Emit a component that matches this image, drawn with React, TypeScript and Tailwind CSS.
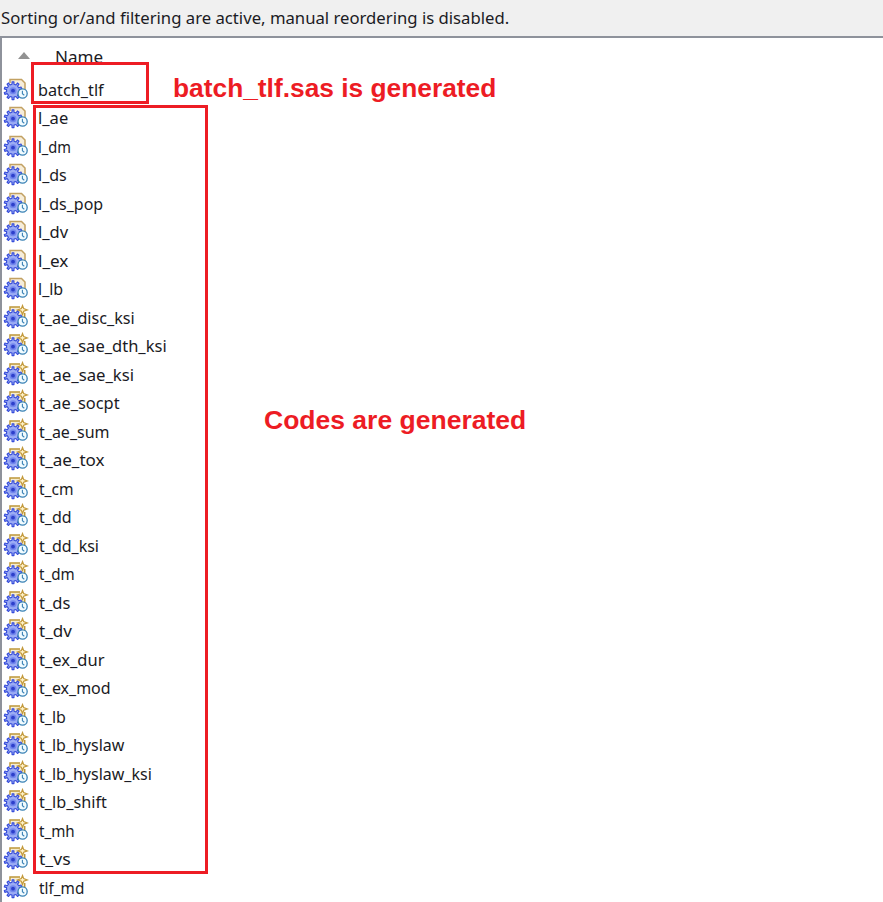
import { useLayoutEffect, useRef, useState } from "react";

type Row = { name: string; width: number };

const rows: Row[] = [
  { name: "batch_tlf", width: 66 },
  { name: "l_ae", width: 30 },
  { name: "l_dm", width: 33 },
  { name: "l_ds", width: 29 },
  { name: "l_ds_pop", width: 65 },
  { name: "l_dv", width: 30 },
  { name: "l_ex", width: 30 },
  { name: "l_lb", width: 25 },
  { name: "t_ae_disc_ksi", width: 96 },
  { name: "t_ae_sae_dth_ksi", width: 128 },
  { name: "t_ae_sae_ksi", width: 95 },
  { name: "t_ae_socpt", width: 81 },
  { name: "t_ae_sum", width: 71 },
  { name: "t_ae_tox", width: 66 },
  { name: "t_cm", width: 35 },
  { name: "t_dd", width: 33 },
  { name: "t_dd_ksi", width: 60 },
  { name: "t_dm", width: 36 },
  { name: "t_ds", width: 31 },
  { name: "t_dv", width: 33 },
  { name: "t_ex_dur", width: 66 },
  { name: "t_ex_mod", width: 72 },
  { name: "t_lb", width: 27 },
  { name: "t_lb_hyslaw", width: 85 },
  { name: "t_lb_hyslaw_ksi", width: 113 },
  { name: "t_lb_shift", width: 68 },
  { name: "t_mh", width: 36 },
  { name: "t_vs", width: 32 },
  { name: "tlf_md", width: 45 },
];

/* Text squeezed horizontally to a known width. */
function FitText({ text, width }: { text: string; width: number }) {
  const ref = useRef<HTMLSpanElement>(null);
  const [scale, setScale] = useState(1);
  useLayoutEffect(() => {
    if (ref.current) setScale(width / ref.current.offsetWidth);
  }, [width]);
  return (
    <span ref={ref} className="inline-block origin-left whitespace-nowrap" style={{ transform: `scaleX(${scale})` }}>
      {text}
    </span>
  );
}

const TEETH = 10;
const gearPoints = Array.from({ length: TEETH * 4 }, (_, i) => {
  const step = (Math.PI * 2) / TEETH;
  const offsets = [-0.24, -0.17, 0.17, 0.24];
  const angle = (Math.floor(i / 4) + offsets[i % 4]) * step - Math.PI / 2;
  const radius = i % 4 === 1 || i % 4 === 2 ? 8.9 : 6.5;
  return `${(11 + radius * Math.cos(angle)).toFixed(2)},${(15.6 + radius * Math.sin(angle)).toFixed(2)}`;
}).join(" ");

function ProgramIcon({ spark }: { spark: boolean }) {
  return (
    <svg className="h-7 w-7 shrink-0" viewBox="0 0.9 28 28" fill="none">
      {spark ? (
        <g>
          <path d="M9 4h9l5 6v6H12z" fill="#f5ecd0" />
          <path d="M8 8V4H18M22.7 10V15" stroke="#bd9638" strokeWidth="1.5" />
          <path d="M20.5 2.4l1.2 3.1 3.6 1.3-3.6 1.3-1.2 3.3-1.2-3.3-3.8-1.3 3.8-1.3z" fill="#fff2c8" stroke="#c39a3d" strokeWidth="1.2" />
        </g>
      ) : (
        <path d="M8 8V4.4H19.5L23 8V16H12" fill="#f6edda" stroke="#c2a162" strokeWidth="1.5" />
      )}
      <polygon points={gearPoints} fill="#9cacf4" stroke="#374dda" strokeWidth="1.15" strokeLinejoin="round" />
      <circle cx="11" cy="15.6" r="3.5" fill="#7488ed" />
      <circle cx="11" cy="15.6" r="1.9" fill="#2d3fcb" />
      <circle cx="20.6" cy="18.4" r="4.6" fill="#f1fbff" stroke="#3a82b5" strokeWidth="1.3" />
      <path d="M20.4 15.7v3l1.9 1.4" stroke="#3a82b5" strokeWidth="1.1" />
    </svg>
  );
}

export default function App() {
  return (
    <main className="relative flex h-[902px] w-[883px] flex-col overflow-hidden bg-[#f0f0f0] font-['Noto_Sans','Open_Sans',sans-serif] text-[16px] text-[#1b1b24]">
      <header className="h-9 shrink-0 pl-px pt-[6px] leading-6">
        <FitText text="Sorting or/and filtering are active, manual reordering is disabled." width={508} />
      </header>
      <section className="flex-1 border-l-2 border-t-2 border-[#8e929b] bg-white">
        <div className="flex h-[37.3px] items-start pl-4">
          <svg className="mt-[14px] h-[7px] w-3" viewBox="0 0 12 7">
            <path d="M0 7 6 0l6 7z" fill="#929292" />
          </svg>
          <div className="ml-[25px] mt-[7px] leading-6">
            <FitText text="Name" width={48} />
          </div>
        </div>
        <ul>
          {rows.map((row, i) => (
            <li key={row.name} className="flex h-[28.52px] items-center">
              <ProgramIcon spark={i > 7} />
              <span className={i > 7 ? "ml-[9px] leading-6" : "ml-2 leading-6"}>
                <FitText text={row.name} width={row.width} />
              </span>
            </li>
          ))}
        </ul>
      </section>
      <div className="absolute left-[31px] top-[62px] h-[42px] w-[118px] border-[3px] border-[#ed1c24]" />
      <div className="absolute left-[33px] top-[105px] h-[769px] w-[175px] border-[3px] border-[#ed1c24]" />
      <p className="absolute left-[173px] top-[73px] font-['Liberation_Sans',sans-serif] text-[26px] font-bold leading-[30px] text-[#ed1c24]">
        <FitText text="batch_tlf.sas is generated" width={323} />
      </p>
      <p className="absolute left-[264px] top-[405px] font-['Liberation_Sans',sans-serif] text-[26px] font-bold leading-[30px] text-[#ed1c24]">
        <FitText text="Codes are generated" width={262} />
      </p>
    </main>
  );
}
